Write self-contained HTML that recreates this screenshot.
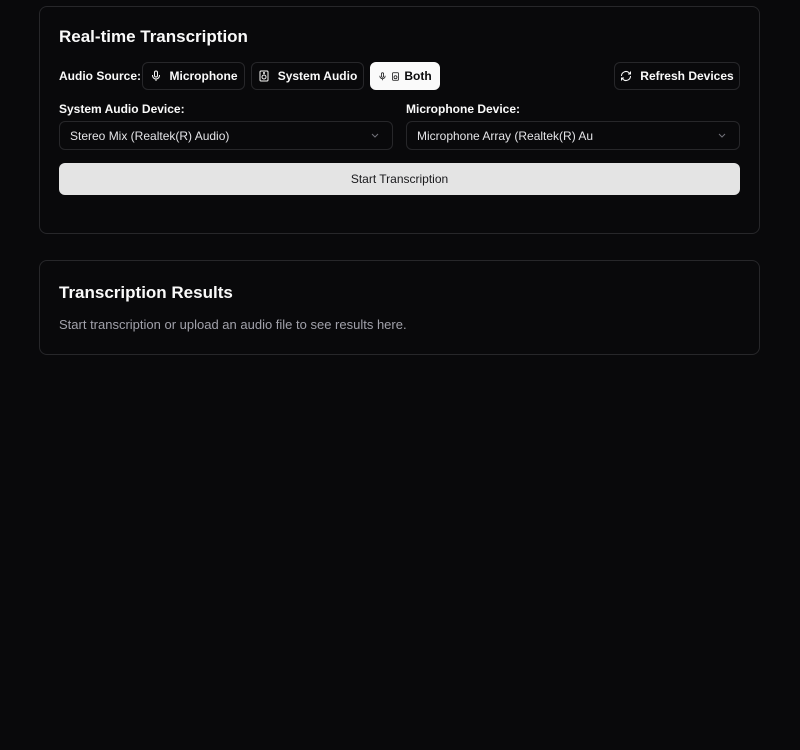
<!DOCTYPE html>
<html><head><style>
*{box-sizing:border-box;margin:0;padding:0}
body{width:800px;height:750px;background:#09090b;font-family:"Liberation Sans",sans-serif;color:#fafafa;position:relative;overflow:hidden}
.card{position:absolute;left:39px;width:721px;border:1px solid #27272a;border-radius:8px;background:#09090b}
.abs{position:absolute}
h2{position:absolute;font-size:17px;font-weight:bold;left:19px}
.btn{position:absolute;top:55px;height:28px;border:1px solid #27272a;border-radius:6px;font-size:12px;font-weight:bold;display:flex;align-items:center;justify-content:center;gap:8px;color:#fafafa}
.lbl{position:absolute;font-size:12px;font-weight:bold;top:95px}
.sel{position:absolute;top:114px;height:29px;border:1px solid #27272a;border-radius:6px;font-size:12px;padding-left:10px;display:flex;align-items:center;color:#e4e4e7}
.sel svg{position:absolute;right:12px;top:10px}
</style></head><body>
<div class="card" style="top:6px;height:228px">
<h2 style="top:20px">Real-time Transcription</h2>
<div class="abs" style="left:19px;top:62px;font-size:12px;font-weight:bold">Audio Source:</div>
<div class="btn" style="left:102px;width:103px"><svg width="12" height="12" viewBox="0 0 24 24" fill="none" stroke="#fafafa" stroke-width="2"><rect x="9" y="2" width="6" height="12" rx="3"/><path d="M5 10v1a7 7 0 0 0 14 0v-1M12 18v4"/></svg>Microphone</div>
<div class="btn" style="left:211px;width:113px"><svg width="12" height="12" viewBox="0 0 24 24" fill="none" stroke="#fafafa" stroke-width="2"><rect x="4" y="2" width="16" height="20" rx="2"/><circle cx="12" cy="14" r="4"/><circle cx="12" cy="6" r="1"/></svg>System Audio</div>
<div class="btn" style="left:330px;width:70px;background:#fafafa;color:#09090b;border-color:#fafafa;gap:4px"><svg width="9" height="9" viewBox="0 0 24 24" fill="none" stroke="#09090b" stroke-width="2"><rect x="9" y="2" width="6" height="12" rx="3"/><path d="M5 10v1a7 7 0 0 0 14 0v-1M12 18v4"/></svg><svg width="9" height="9" viewBox="0 0 24 24" fill="none" stroke="#09090b" stroke-width="2"><rect x="4" y="2" width="16" height="20" rx="2"/><circle cx="12" cy="14" r="4"/></svg>Both</div>
<div class="btn" style="left:574px;width:126px"><svg width="12" height="12" viewBox="0 0 24 24" fill="none" stroke="#fafafa" stroke-width="2"><path d="M3 12a9 9 0 0 1 15-6.7L21 8M21 3v5h-5M21 12a9 9 0 0 1-15 6.7L3 16M3 21v-5h5"/></svg>Refresh Devices</div>
<div class="lbl" style="left:19px">System Audio Device:</div>
<div class="lbl" style="left:366px">Microphone Device:</div>
<div class="sel" style="left:19px;width:334px">Stereo Mix (Realtek(R) Audio)<svg width="10" height="8" viewBox="0 0 10 8"><path d="M2 2l3 3 3-3" stroke="#71717a" fill="none"/></svg></div>
<div class="sel" style="left:366px;width:334px">Microphone Array (Realtek(R) Au<svg width="10" height="8" viewBox="0 0 10 8"><path d="M2 2l3 3 3-3" stroke="#71717a" fill="none"/></svg></div>
<div class="abs" style="left:19px;top:156px;width:681px;height:32px;background:#e4e4e4;border-radius:6px;color:#18181b;font-size:12px;display:flex;align-items:center;justify-content:center">Start Transcription</div>
</div>
<div class="card" style="top:260px;height:95px">
<h2 style="top:22px">Transcription Results</h2>
<div class="abs" style="left:19px;top:56px;font-size:13px;color:#a1a1aa">Start transcription or upload an audio file to see results here.</div>
</div>
</body></html>
